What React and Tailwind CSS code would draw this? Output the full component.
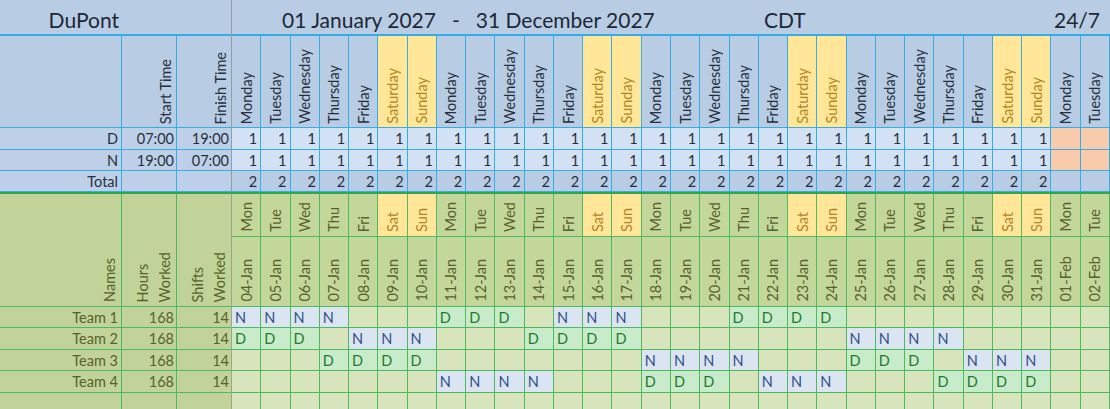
const DAY_LONG = ['Monday', 'Tuesday', 'Wednesday', 'Thursday', 'Friday', 'Saturday', 'Sunday'];
const DAY_SHORT = ['Mon', 'Tue', 'Wed', 'Thu', 'Fri', 'Sat', 'Sun'];

const cols = Array.from({ length: 30 }, (_, i) => {
  const jan = i < 28;
  const d = jan ? 4 + i : i - 27;
  return {
    long: DAY_LONG[i % 7],
    short: DAY_SHORT[i % 7],
    date: `${String(d).padStart(2, '0')}-${jan ? 'Jan' : 'Feb'}`,
    weekend: i % 7 >= 5,
    future: i >= 28,
  };
});

const teams = [
  { name: 'Team 1', plan: 'NNNN...DDD.NNN...DDDD.........' },
  { name: 'Team 2', plan: 'DDD.NNN...DDDD.......NNNN.....' },
  { name: 'Team 3', plan: '...DDDD.......NNNN...DDD.NNN..' },
  { name: 'Team 4', plan: '.......NNNN...DDD.NNN...DDDD..' },
];
const rowH = ['h-[21px]', 'h-[22px]', 'h-[21px]', 'h-[22px]'];

const blue = 'border-[#36ade4]';
const green = 'border-[#4dba5f]';

function V({ children, className = '' }) {
  return <span className={`[writing-mode:vertical-rl] rotate-180 whitespace-nowrap ${className}`}>{children}</span>;
}

export default function App() {
  return (
    <div className="w-[1110px] h-[409px] overflow-hidden font-['Lato','Liberation_Sans',sans-serif] text-[14.5px] leading-[17px]">
      {/* top: shift pattern */}
      <div className="flex bg-[#b8cce4] text-[#26303c]">
        <div className="w-[232px] shrink-0 border-r border-[#8f9eab]">
          <div className={`h-[36px] border-b-2 ${blue} flex items-center pt-[5px] text-[21px] text-[#1e2836]`}>
            <div className="w-[122px] text-right pr-[3px]">DuPont</div>
          </div>
          <div className={`h-[92px] border-b ${blue} flex`}>
            <div className={`w-[122px] border-r ${blue}`} />
            <div className={`w-[55px] border-r ${blue} flex items-end justify-end pr-[2px] pb-[3px]`}>
              <V>Start Time</V>
            </div>
            <div className="flex-1 flex items-end justify-end pr-[2px] pb-[3px]">
              <V>Finish Time</V>
            </div>
          </div>
          {[
            ['D', '07:00', '19:00', 'h-[22px]'],
            ['N', '19:00', '07:00', 'h-[21px]'],
            ['Total', '', '', 'h-[21px]'],
          ].map(([a, b, c, h]) => (
            <div key={a} className={`${h} border-b ${blue} flex bg-[#bdd0e7]`}>
              <div className={`w-[122px] border-r ${blue} flex items-center justify-end pr-[3px]`}>{a}</div>
              <div className={`w-[55px] border-r ${blue} flex items-center justify-end pr-[2px]`}>{b}</div>
              <div className="flex-1 flex items-center justify-end pr-[2px]">{c}</div>
            </div>
          ))}
        </div>

        <div className="flex-1 min-w-0">
          <div className={`h-[36px] border-b-2 ${blue} flex items-center pt-[5px] text-[21px] text-[#1e2836]`}>
            <div className="w-[532px] pl-[50px] flex gap-[16px]">
              <span>01 January 2027</span>
              <span>-</span>
              <span>31 December 2027</span>
            </div>
            <span>CDT</span>
            <span className="ml-auto pr-[10px]">24/7</span>
          </div>
          <div className={`h-[92px] border-b ${blue} grid grid-cols-[repeat(30,minmax(0,1fr))]`}>
            {cols.map((c, i) => (
              <div
                key={i}
                className={`border-r ${blue} flex items-end justify-center pb-[3px] ${
                  c.weekend ? 'bg-[#ffe699] text-[#b4861c]' : ''
                }`}
              >
                <V>{c.long}</V>
              </div>
            ))}
          </div>
          {['h-[22px]', 'h-[21px]'].map((h, r) => (
            <div key={r} className={`${h} border-b ${blue} grid grid-cols-[repeat(30,minmax(0,1fr))]`}>
              {cols.map((c, i) => (
                <div
                  key={i}
                  className={`border-r ${blue} flex items-center justify-end pr-[3px] ${
                    c.future ? 'bg-[#f8cbad]' : 'bg-[#d2e1f3]'
                  }`}
                >
                  {c.future ? '' : '1'}
                </div>
              ))}
            </div>
          ))}
          <div className={`h-[21px] border-b ${blue} grid grid-cols-[repeat(30,minmax(0,1fr))]`}>
            {cols.map((c, i) => (
              <div key={i} className={`border-r ${blue} flex items-center justify-end pr-[3px]`}>
                {c.future ? '' : '2'}
              </div>
            ))}
          </div>
        </div>
      </div>

      {/* bottom: team rota */}
      <div className="flex border-t-2 border-[#2ea64b] bg-[#c4d79b] text-[#58612e]">
        <div className="w-[232px] shrink-0 border-r border-[#9aa58a] bg-[#c1d398]">
          <div className={`h-[113px] border-b ${green} flex`}>
            <div className={`w-[122px] border-r ${green} flex items-end justify-end pr-[3px] pb-[4px]`}>
              <V>Names</V>
            </div>
            <div className={`w-[55px] border-r ${green} flex items-end justify-end pb-[4px]`}>
              <V className="leading-[22px]">
                Hours
                <br />
                Worked
              </V>
            </div>
            <div className="flex-1 flex items-end justify-end pb-[4px]">
              <V className="leading-[22px]">
                Shifts
                <br />
                Worked
              </V>
            </div>
          </div>
          {teams.map((t, r) => (
            <div key={t.name} className={`${rowH[r]} border-b ${green} flex`}>
              <div className={`w-[122px] border-r ${green} flex items-center justify-end pr-[3px]`}>{t.name}</div>
              <div className={`w-[55px] border-r ${green} flex items-center justify-end pr-[2px]`}>168</div>
              <div className="flex-1 flex items-center justify-end pr-[2px]">14</div>
            </div>
          ))}
          <div className="h-[22px] flex">
            <div className={`w-[122px] border-r ${green}`} />
            <div className={`w-[55px] border-r ${green}`} />
          </div>
        </div>

        <div className="flex-1 min-w-0">
          <div className={`h-[43px] border-b ${green} grid grid-cols-[repeat(30,minmax(0,1fr))]`}>
            {cols.map((c, i) => (
              <div
                key={i}
                className={`border-r ${green} flex items-end justify-center pb-[4px] ${
                  c.weekend ? 'bg-[#ffe699] text-[#b3842a]' : ''
                }`}
              >
                <V>{c.short}</V>
              </div>
            ))}
          </div>
          <div className={`h-[70px] border-b ${green} grid grid-cols-[repeat(30,minmax(0,1fr))]`}>
            {cols.map((c, i) => (
              <div key={i} className={`border-r ${green} flex items-end justify-center pb-[4px]`}>
                <V>{c.date}</V>
              </div>
            ))}
          </div>
          {teams.map((t, r) => (
            <div key={t.name} className={`${rowH[r]} border-b ${green} grid grid-cols-[repeat(30,minmax(0,1fr))]`}>
              {t.plan.split('').map((s, i) => (
                <div
                  key={i}
                  className={`border-r ${green} flex items-center pl-[3px] ${
                    s === 'N'
                      ? 'bg-[#dbe5f1] text-[#2f4e8c]'
                      : s === 'D'
                      ? 'bg-[#c8ecc9] text-[#1f7a30]'
                      : 'bg-[#d8e4bc]'
                  }`}
                >
                  {s === '.' ? '' : s}
                </div>
              ))}
            </div>
          ))}
          <div className="h-[22px] grid grid-cols-[repeat(30,minmax(0,1fr))]">
            {cols.map((c, i) => (
              <div key={i} className={`border-r ${green} bg-[#d8e4bc]`} />
            ))}
          </div>
        </div>
      </div>
    </div>
  );
}
